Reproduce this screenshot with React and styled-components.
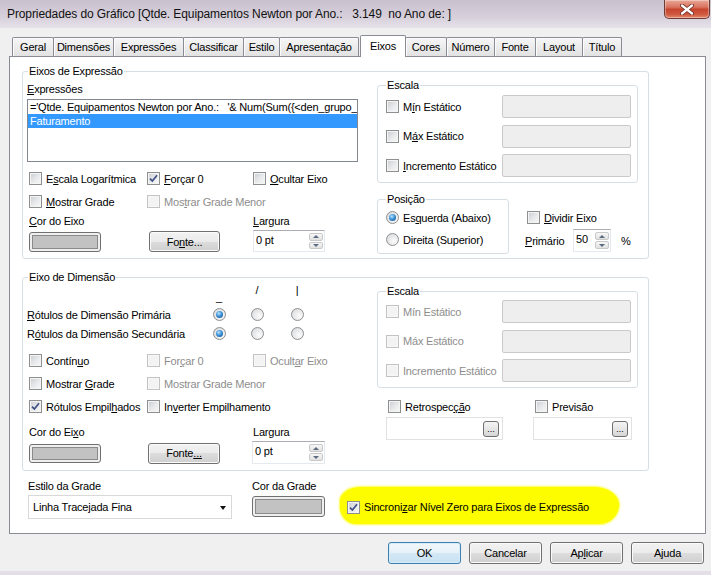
import React from "react";
import styled, { createGlobalStyle } from "styled-components";

const FONT = `"Liberation Sans", Arial, sans-serif`;

const GlobalStyle = createGlobalStyle`
  html, body { margin: 0; padding: 0; }
  body {
    background: #e4dee8;
    font-family: ${FONT};
    font-size: 11px;
    letter-spacing: -0.2px;
    color: #000;
  }
  * { box-sizing: border-box; }
  u { text-decoration-thickness: 1px; text-underline-offset: 1px; }
`;

const Window = styled.div`
  width: 711px;
  height: 575px;
  display: flex;
  flex-direction: column;
  overflow: hidden;
  background: linear-gradient(180deg, #c9c0cf 0px, #d8d1dc 18px, #e7e2ea 28px, #e4dee8 100%);
`;

const TitleBar = styled.div`
  height: 28px;
  flex-shrink: 0;
  display: flex;
  justify-content: space-between;
  align-items: flex-start;
`;

const Title = styled.div`
  padding-left: 7px;
  line-height: 28px;
  font-size: 12px;
  letter-spacing: -0.1px;
  white-space: pre;
  color: #111;
`;

const CloseButton = styled.div`
  width: 46px;
  height: 19px;
  margin-right: 1px;
  border: 1px solid #6e3a34;
  border-top: none;
  border-radius: 0 0 5px 5px;
  background: linear-gradient(180deg, #e9a898 0%, #d9735f 40%, #c7452f 52%, #cf5a40 80%, #e48a6e 100%);
  box-shadow: inset 0 0 0 1px rgba(255, 255, 255, 0.35);
  display: flex;
  align-items: center;
  justify-content: center;
`;

const Client = styled.div`
  flex: 1;
  margin-bottom: 4px;
  background: #f0f0f0;
  padding: 7px 5px 0 9px;
  display: flex;
  flex-direction: column;
`;

const TabStrip = styled.div`
  display: flex;
  align-items: flex-end;
  height: 22px;
  padding-left: 3px;
  margin-bottom: -1px;
  position: relative;
  z-index: 1;
`;

const Tab = styled.div`
  width: ${(p) => p.$w}px;
  height: ${(p) => (p.$active ? 22 : 19)}px;
  margin-bottom: ${(p) => (p.$active ? 0 : 1)}px;
  margin-left: ${(p) => (p.$active ? 2 : 0)}px;
  margin-right: -1px;
  border: 1px solid #898c95;
  border-bottom: none;
  border-radius: 2px 2px 0 0;
  background: ${(p) => (p.$active ? "#fff" : "linear-gradient(180deg, #f6f6f6 0%, #ececec 50%, #e2e2e2 100%)")};
  box-shadow: ${(p) => (p.$active ? "none" : "inset 1px 1px 0 #fcfcfc")};
  display: flex;
  justify-content: center;
  padding-top: ${(p) => (p.$active ? 3 : 2)}px;
  line-height: 14px;
  white-space: nowrap;
`;

const Panel = styled.div`
  height: 478px;
  background: #fff;
  border: 1px solid #898c95;
  padding: 14px 0 0 12px;
`;

const Group = styled.div`
  position: relative;
  width: ${(p) => p.$w || 627}px;
  height: ${(p) => p.$h}px;
  margin-top: ${(p) => p.$mt || 0}px;
  border: 1px solid #d5dfe5;
  border-radius: 3px;
`;

const Legend = styled.span`
  position: absolute;
  top: -8px;
  left: ${(p) => p.$left || 5}px;
  padding: 0 1px;
  background: #fff;
  line-height: 14px;
  white-space: nowrap;
`;

const GroupBody = styled.div`
  display: flex;
  align-items: flex-start;
  padding: ${(p) => p.$pad};
`;

const LeftCol = styled.div`
  width: 331px;
  flex-shrink: 0;
`;

const RightCol = styled.div`
  margin-left: 19px;
  margin-top: ${(p) => p.$mt}px;
`;

const FieldLabel = styled.div`
  line-height: 14px;
  margin-bottom: 3px;
`;

const ListBox = styled.div`
  height: 63px;
  border: 1px solid #828790;
  background: #fff;
  overflow: hidden;
`;

const ListRow = styled.div`
  height: 14px;
  line-height: 14px;
  padding-left: 2px;
  white-space: pre;
  background: ${(p) => (p.$selected ? "#3399ff" : "transparent")};
  color: ${(p) => (p.$selected ? "#fff" : "#000")};
`;

const OptRow = styled.div`
  display: grid;
  grid-template-columns: 118px 106px auto;
  align-items: center;
  padding-left: 2px;
  margin-top: ${(p) => p.$mt || 0}px;
  line-height: 14px;
  white-space: nowrap;
`;

const CheckItem = styled.label`
  display: flex;
  align-items: center;
  gap: 4px;
  height: 17px;
  white-space: nowrap;
  color: ${(p) => (p.$disabled ? "#8d8d8d" : "#000")};
`;

const Box = styled.span`
  width: 13px;
  height: 13px;
  flex-shrink: 0;
  border: 1px solid ${(p) => (p.$disabled ? "#c3c3c3" : "#8e8f8f")};
  background: ${(p) => (p.$disabled ? "#f3f3f3" : "linear-gradient(135deg, #c9ccd1 0%, #e9eaec 55%, #f8f8f8 100%)")};
  box-shadow: inset 0 0 0 1px ${(p) => (p.$disabled ? "#f7f7f7" : "#f4f4f4")};
  display: flex;
  align-items: center;
  justify-content: center;
`;

const RadioItem = styled.label`
  display: flex;
  align-items: center;
  gap: 4px;
  height: 17px;
  white-space: nowrap;
`;

const RadioDot = styled.span`
  width: 13px;
  height: 13px;
  flex-shrink: 0;
  border-radius: 50%;
  border: 1px solid #8e8f8f;
  background: radial-gradient(circle at 65% 65%, #fdfdfd 0%, #e4e5e7 60%, #cfd1d4 100%);
  display: flex;
  align-items: center;
  justify-content: center;
  &::after {
    content: "";
    display: ${(p) => (p.$on ? "block" : "none")};
    width: 7px;
    height: 7px;
    border-radius: 50%;
    background: radial-gradient(circle at 40% 35%, #bfe6fb 0%, #3d93d8 45%, #0f4586 100%);
  }
`;

const Swatch = styled.div`
  width: ${(p) => p.$w}px;
  height: ${(p) => p.$h}px;
  margin-top: ${(p) => p.$mt || 0}px;
  border: 1px solid #707070;
  border-radius: 3px;
  padding: 2px;
  background: #efefef;
  & > span {
    display: block;
    height: 100%;
    background: #c2c2c2;
    border: 1px solid #8a8a8a;
  }
`;

const Button = styled.div`
  width: ${(p) => p.$w}px;
  height: ${(p) => p.$h || 22}px;
  margin-left: ${(p) => p.$ml || 0}px;
  margin-top: ${(p) => p.$mt || 0}px;
  border: 1px solid ${(p) => (p.$def ? "#3c7fb1" : "#707070")};
  border-radius: 3px;
  background: ${(p) =>
    p.$def
      ? "linear-gradient(180deg, #f2f8fc 0%, #e5f1f9 50%, #d4e8f5 50%, #c8e1f2 100%)"
      : "linear-gradient(180deg, #f2f2f2 0%, #ebebeb 50%, #dddddd 50%, #cfcfcf 100%)"};
  box-shadow: inset 0 0 0 1px ${(p) => (p.$def ? "#d7ecf9" : "#fbfbfb")};
  display: flex;
  align-items: center;
  justify-content: center;
  line-height: 14px;
  white-space: nowrap;
`;

const Spin = styled.div`
  width: ${(p) => p.$w}px;
  height: ${(p) => p.$h}px;
  margin-left: ${(p) => p.$ml || 0}px;
  border: 1px solid #e3e9ef;
  border-top-color: #abadb3;
  background: #fff;
  display: flex;
  justify-content: space-between;
  padding: 1px;
`;

const SpinText = styled.span`
  padding: 2px 0 0 1px;
  line-height: 13px;
`;

const SpinButtons = styled.div`
  width: 14px;
  display: flex;
  flex-direction: column;
  gap: 1px;
  padding: 1px 0;
`;

const SpinBtn = styled.div`
  flex: 1;
  border: 1px solid #c9c9c9;
  border-radius: 2px;
  background: linear-gradient(180deg, #f7f7f7, #e1e1e1);
  display: flex;
  align-items: center;
  justify-content: center;
  &::after {
    content: "";
    border-left: 3px solid transparent;
    border-right: 3px solid transparent;
    ${(p) => (p.$down ? "border-top" : "border-bottom")}: 3px solid #5c6b80;
  }
`;

const ScaleGrid = styled.div`
  display: grid;
  grid-template-columns: 116px 129px;
  grid-auto-rows: 23px;
  row-gap: 6.5px;
  align-items: center;
  padding: ${(p) => p.$pad};
`;

const DisabledInput = styled.div`
  height: 23px;
  border: 1px solid #c9c9c9;
  border-radius: 2px;
  background: #eeeeee;
`;

const FlexRow = styled.div`
  display: flex;
  align-items: flex-start;
  margin-top: ${(p) => p.$mt || 0}px;
`;

const RadioStack = styled.div`
  display: flex;
  flex-direction: column;
  gap: 5px;
  padding: 9px 0 0 8px;
`;

const SplitCol = styled.div`
  margin-left: 18px;
  padding-top: 10px;
`;

const PrimRow = styled.div`
  display: grid;
  grid-template-columns: 48px 38px auto;
  align-items: center;
  margin: 3px 0 0 -2px;
  & > span:last-child {
    padding-left: 10px;
  }
`;

const RadioTable = styled.div`
  display: grid;
  grid-template-columns: 173px 38px 38px 42px;
  grid-template-rows: 21px 17px 17px;
  row-gap: 2px;
  align-items: center;
  line-height: 14px;
  white-space: nowrap;
`;

const HeadCell = styled.span`
  align-self: start;
  justify-self: center;
  padding-top: ${(p) => (p.$low ? 7 : 0)}px;
`;

const Cell = styled.span`
  justify-self: ${(p) => (p.$center ? "center" : "start")};
`;

const RetroGrid = styled.div`
  display: grid;
  grid-template-columns: 147px auto;
  padding-left: 9px;
  margin-top: 10px;
  row-gap: 2px;
  & > label {
    padding-left: 2px;
  }
`;

const PickField = styled.div`
  width: ${(p) => p.$w}px;
  height: 23px;
  border: 1px solid #e2e2e2;
  background: #fff;
  display: flex;
  justify-content: flex-end;
  align-items: center;
  padding-right: 3px;
`;

const DotsBtn = styled.div`
  width: 16px;
  height: 16px;
  border: 1px solid #707070;
  border-radius: 3px;
  background: linear-gradient(180deg, #f4f4f4 0%, #e6e6e6 50%, #d6d6d6 100%);
  font-size: 9px;
  line-height: 15px;
  text-align: center;
  letter-spacing: 0;
`;

const BottomRow = styled.div`
  display: flex;
  align-items: flex-start;
  margin: 8px 0 0 6px;
  line-height: 14px;
`;

const BottomCol = styled.div`
  margin-left: ${(p) => p.$ml || 0}px;
  width: ${(p) => (p.$w ? `${p.$w}px` : "auto")};
`;

const Select = styled.div`
  width: 204px;
  height: 24px;
  margin-top: 2px;
  border: 1px solid #d9d9d9;
  background: #fff;
  display: flex;
  align-items: center;
  justify-content: space-between;
  padding: 0 5px 0 4px;
  &::after {
    content: "";
    border-left: 3.5px solid transparent;
    border-right: 3.5px solid transparent;
    border-top: 4px solid #111;
    margin-top: 2px;
  }
`;

const Highlight = styled.div`
  margin: 8px 0 0 13px;
  height: 37px;
  padding: 3px 30px 0 7px;
  display: flex;
  align-items: center;
  background: #fdfd00;
  border-radius: 22px 26px 20px 16px / 14px 18px 20px 18px;
  box-shadow: 0 0 2px 1px rgba(253, 253, 0, 0.7);
`;

const ButtonBar = styled.div`
  display: flex;
  justify-content: flex-end;
  gap: 8px;
  margin-top: 8px;
  padding-right: 2px;
`;

const CheckMark = () => (
  <svg width="9" height="9" viewBox="0 0 9 9">
    <path d="M1 4.6 L3.4 7 L8 1.3" fill="none" stroke="#3d4f83" strokeWidth="1.7" />
  </svg>
);

const Check = ({ checked, disabled, children }) => (
  <CheckItem $disabled={disabled}>
    <Box $disabled={disabled}>{checked && <CheckMark />}</Box>
    <span>{children}</span>
  </CheckItem>
);

const Radio = ({ on, children }) => (
  <RadioItem>
    <RadioDot $on={on} />
    {children && <span>{children}</span>}
  </RadioItem>
);

const Spinner = ({ value, w, h, ml }) => (
  <Spin $w={w} $h={h} $ml={ml}>
    <SpinText>{value}</SpinText>
    <SpinButtons>
      <SpinBtn />
      <SpinBtn $down />
    </SpinButtons>
  </Spin>
);

const tabs = [
  ["Geral", 42],
  ["Dimensões", 61],
  ["Expressões", 71],
  ["Classificar", 61],
  ["Estilo", 37],
  ["Apresentação", 80],
  ["Eixos", 46, true],
  ["Cores", 42],
  ["Número", 49],
  ["Fonte", 42],
  ["Layout", 48],
  ["Título", 40],
];

const App = () => {
  return (
    <Window>
      <GlobalStyle />
      <TitleBar>
        <Title>Propriedades do Gráfico [Qtde. Equipamentos Newton por Ano.:   3.149  no Ano de: ]</Title>
        <CloseButton>
          <svg width="16" height="11" viewBox="0 0 16 11">
            <path d="M3 1.5 L13 9.5 M13 1.5 L3 9.5" stroke="#6a2a20" strokeWidth="4" strokeLinecap="round" />
            <path d="M3 1.5 L13 9.5 M13 1.5 L3 9.5" stroke="#fff" strokeWidth="2.3" strokeLinecap="round" />
          </svg>
        </CloseButton>
      </TitleBar>

      <Client>
        <TabStrip>
          {tabs.map(([label, w, active]) => (
            <Tab key={label} $w={w} $active={active}>
              {label}
            </Tab>
          ))}
        </TabStrip>

        <Panel>
          <Group $h={188}>
            <Legend>Eixos de Expressão</Legend>
            <GroupBody $pad="10px 0 0 4px">
              <LeftCol>
                <FieldLabel>
                  <u>E</u>xpressões
                </FieldLabel>
                <ListBox>
                  <ListRow>{"='Qtde. Equipamentos Newton por Ano.:   '& Num(Sum({<den_grupo_"}</ListRow>
                  <ListRow $selected>Faturamento</ListRow>
                </ListBox>
                <OptRow $mt={8}>
                  <Check>
                    E<u>s</u>cala Logarítmica
                  </Check>
                  <Check checked>
                    <u>F</u>orçar 0
                  </Check>
                  <Check>
                    <u>O</u>cultar Eixo
                  </Check>
                </OptRow>
                <OptRow $mt={6}>
                  <Check>
                    <u>M</u>ostrar Grade
                  </Check>
                  <Check disabled>
                    Mos<u>t</u>rar Grade Menor
                  </Check>
                </OptRow>
                <OptRow $mt={4}>
                  <span>
                    <u>C</u>or do Eixo
                  </span>
                  <span />
                  <span>
                    <u>L</u>argura
                  </span>
                </OptRow>
                <OptRow $mt={2}>
                  <Swatch $w={72} $h={20} $mt={1}>
                    <span />
                  </Swatch>
                  <Button $w={71} $h={21} $ml={2} $mt={1}>
                    Fo<u>n</u>te...
                  </Button>
                  <Spinner value="0 pt" w={72} h={22} />
                </OptRow>
              </LeftCol>

              <RightCol $mt={3}>
                <Group $w={261} $h={98}>
                  <Legend $left={8}>Escala</Legend>
                  <ScaleGrid $pad="9px 0 0 8px">
                    <Check>
                      M<u>í</u>n Estático
                    </Check>
                    <DisabledInput />
                    <Check>
                      M<u>á</u>x Estático
                    </Check>
                    <DisabledInput />
                    <Check>
                      <u>I</u>ncremento Estático
                    </Check>
                    <DisabledInput />
                  </ScaleGrid>
                </Group>
                <FlexRow $mt={16}>
                  <Group $w={132} $h={55}>
                    <Legend $left={8}>Posição</Legend>
                    <RadioStack>
                      <Radio on>
                        Es<u>q</u>uerda (Abaixo)
                      </Radio>
                      <Radio>Direita (Superior)</Radio>
                    </RadioStack>
                  </Group>
                  <SplitCol>
                    <Check>
                      <u>D</u>ividir Eixo
                    </Check>
                    <PrimRow>
                      <span>
                        <u>P</u>rimário
                      </span>
                      <Spinner value="50" w={38} h={23} />
                      <span>%</span>
                    </PrimRow>
                  </SplitCol>
                </FlexRow>
              </RightCol>
            </GroupBody>
          </Group>

          <Group $h={194} $mt={18}>
            <Legend>Eixo de Dimensão</Legend>
            <GroupBody $pad="5px 0 0 4px">
              <LeftCol>
                <RadioTable>
                  <span />
                  <HeadCell $low>_</HeadCell>
                  <HeadCell>/</HeadCell>
                  <HeadCell>|</HeadCell>
                  <Cell>
                    <u>R</u>ótulos de Dimensão Primária
                  </Cell>
                  <Cell $center>
                    <Radio on />
                  </Cell>
                  <Cell $center>
                    <Radio />
                  </Cell>
                  <Cell $center>
                    <Radio />
                  </Cell>
                  <Cell>
                    R<u>ó</u>tulos da Dimensão Secundária
                  </Cell>
                  <Cell $center>
                    <Radio on />
                  </Cell>
                  <Cell $center>
                    <Radio />
                  </Cell>
                  <Cell $center>
                    <Radio />
                  </Cell>
                </RadioTable>
                <OptRow $mt={10}>
                  <Check>
                    Contín<u>u</u>o
                  </Check>
                  <Check disabled>
                    For<u>ç</u>ar 0
                  </Check>
                  <Check disabled>
                    Ocult<u>a</u>r Eixo
                  </Check>
                </OptRow>
                <OptRow $mt={6}>
                  <Check>
                    Mostrar <u>G</u>rade
                  </Check>
                  <Check disabled>Mostrar Grade Menor</Check>
                </OptRow>
                <OptRow $mt={6}>
                  <Check checked>
                    Rótulos Empil<u>h</u>ados
                  </Check>
                  <Check>
                    In<u>v</u>erter Empilhamento
                  </Check>
                </OptRow>
                <OptRow $mt={10}>
                  <span>
                    Cor do Ei<u>x</u>o
                  </span>
                  <span />
                  <span>Largura</span>
                </OptRow>
                <OptRow $mt={2}>
                  <Swatch $w={72} $h={19} $mt={1}>
                    <span />
                  </Swatch>
                  <Button $w={72} $h={21} $ml={1} $mt={1}>
                    Fonte<u>...</u>
                  </Button>
                  <Spinner value="0 pt" w={73} h={23} ml={-1} />
                </OptRow>
              </LeftCol>

              <RightCol $mt={8}>
                <Group $w={261} $h={97}>
                  <Legend $left={8}>Escala</Legend>
                  <ScaleGrid $pad="8px 0 0 8px">
                    <Check disabled>Mín Estático</Check>
                    <DisabledInput />
                    <Check disabled>Máx Estático</Check>
                    <DisabledInput />
                    <Check disabled>Incremento Estático</Check>
                    <DisabledInput />
                  </ScaleGrid>
                </Group>
                <RetroGrid>
                  <Check>
                    Retrospec<u>çã</u>o
                  </Check>
                  <Check>Previsão</Check>
                  <PickField $w={117}>
                    <DotsBtn>...</DotsBtn>
                  </PickField>
                  <PickField $w={99}>
                    <DotsBtn>...</DotsBtn>
                  </PickField>
                </RetroGrid>
              </RightCol>
            </GroupBody>
          </Group>

          <BottomRow>
            <BottomCol $w={204}>
              <div>Estilo da Grade</div>
              <Select>
                <span>Linha Tracejada Fina</span>
              </Select>
            </BottomCol>
            <BottomCol $ml={20} $w={75}>
              <div>Cor da Grade</div>
              <Swatch $w={73} $h={21} $mt={3}>
                <span />
              </Swatch>
            </BottomCol>
            <Highlight>
              <Check checked>
                Sincroni<u>z</u>ar Nível Zero para Eixos de Expressão
              </Check>
            </Highlight>
          </BottomRow>
        </Panel>

        <ButtonBar>
          <Button $w={73} $def>
            OK
          </Button>
          <Button $w={73}>Cancelar</Button>
          <Button $w={73}>
            Ap<u>l</u>icar
          </Button>
          <Button $w={73}>Ajuda</Button>
        </ButtonBar>
      </Client>
    </Window>
  );
};

export default App;
